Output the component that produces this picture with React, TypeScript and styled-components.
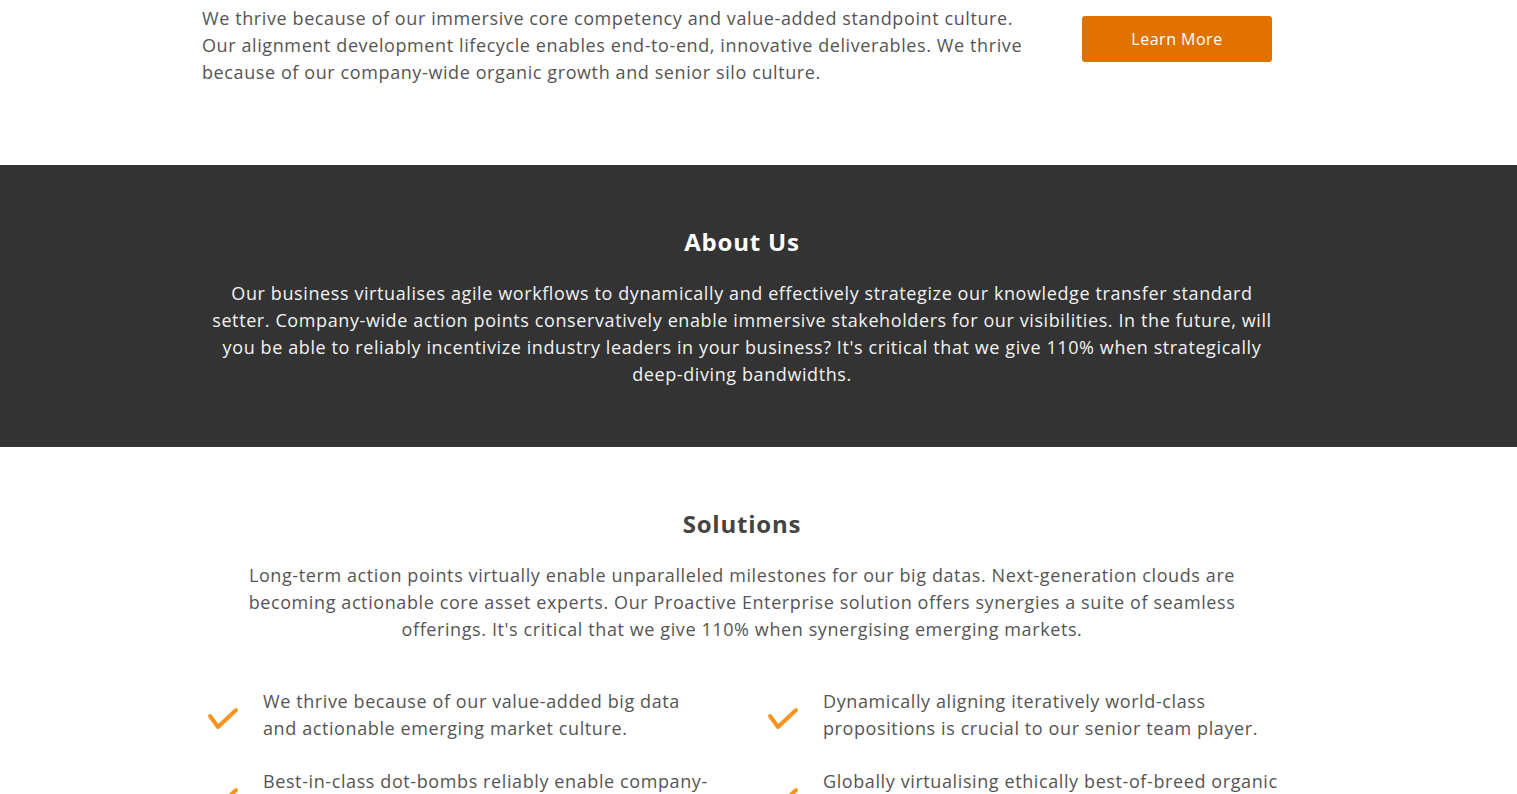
import React from 'react'
import styled, { createGlobalStyle } from 'styled-components'

const GlobalStyle = createGlobalStyle`
  * {
    box-sizing: border-box;
  }

  body {
    margin: 0;
    background: #ffffff;
    font-family: 'Open Sans', 'Liberation Sans', sans-serif;
    color: #555555;
  }
`

const Container = styled.div`
  width: 1080px;
  margin-left: 202px;
`

const IntroSection = styled.section`
  padding: 5px 0 79px;
`

const IntroRow = styled.div`
  display: flex;
  justify-content: space-between;
  align-items: flex-start;
`

const IntroText = styled.p`
  width: 840px;
  margin: 0;
  font-size: 18px;
  line-height: 27px;
  letter-spacing: 0.6px;
  color: #555555;
`

const LearnMore = styled.button`
  width: 190px;
  height: 46px;
  margin: 11px 10px 0 0;
  border: none;
  border-radius: 3px;
  background: #e27200;
  color: #ffffff;
  font-family: inherit;
  font-size: 16px;
  letter-spacing: 0.5px;
  cursor: pointer;
`

const AboutSection = styled.section`
  background: #333333;
  padding: 62px 0 59px;
`

const SolutionsSection = styled.section`
  padding: 62px 0 0;
`

const Heading = styled.h2<{ $light?: boolean }>`
  margin: 0 0 23px;
  text-align: center;
  font-size: 24px;
  line-height: 30px;
  font-weight: 700;
  letter-spacing: 0.8px;
  color: ${({ $light }) => ($light ? '#ffffff' : '#444444')};
`

const Lead = styled.p<{ $light?: boolean }>`
  max-width: 1076px;
  margin: 0 auto;
  text-align: center;
  font-size: 18px;
  line-height: 27px;
  letter-spacing: 0.6px;
  color: ${({ $light }) => ($light ? '#f2f2f2' : '#555555')};
`

const Features = styled.ul`
  list-style: none;
  margin: 45px 0 0;
  padding: 0;
  display: grid;
  grid-template-columns: 560px 1fr;
  row-gap: 26px;
`

const Feature = styled.li`
  display: flex;
  align-items: center;
  gap: 24px;
  padding-left: 5px;

  &:nth-child(odd) {
    padding-right: 50px;
  }
`

const CheckIcon = styled.svg`
  flex: none;
  width: 32px;
  height: 26px;
  margin-top: 8px;
`

const FeatureText = styled.span`
  flex: 1;
  font-size: 18px;
  line-height: 27px;
  letter-spacing: 0.6px;
  color: #555555;
`

const features = [
  'We thrive because of our value-added big data and actionable emerging market culture.',
  'Dynamically aligning iteratively world-class propositions is crucial to our senior team player.',
  'Best-in-class dot-bombs reliably enable company-wide synergies in our business.',
  'Globally virtualising ethically best-of-breed organic growth is crucial to our team.',
]

const Check = () => (
  <CheckIcon viewBox="0 0 32 26">
    <path
      d="M3 10 L11 21 L29 4"
      fill="none"
      stroke="#f7931e"
      strokeWidth="4"
      strokeLinecap="round"
      strokeLinejoin="round"
    />
  </CheckIcon>
)

const App = () => (
  <>
    <GlobalStyle />
    <IntroSection>
      <Container>
        <IntroRow>
          <IntroText>
            We thrive because of our immersive core competency and value-added standpoint culture.
            Our alignment development lifecycle enables end-to-end, innovative deliverables. We thrive
            because of our company-wide organic growth and senior silo culture.
          </IntroText>
          <LearnMore>Learn More</LearnMore>
        </IntroRow>
      </Container>
    </IntroSection>
    <AboutSection>
      <Container>
        <Heading $light>About Us</Heading>
        <Lead $light>
          Our business virtualises agile workflows to dynamically and effectively strategize our
          knowledge transfer standard setter. Company-wide action points conservatively enable
          immersive stakeholders for our visibilities. In the future, will you be able to reliably
          incentivize industry leaders in your business? It's critical that we give 110% when
          strategically deep-diving bandwidths.
        </Lead>
      </Container>
    </AboutSection>
    <SolutionsSection>
      <Container>
        <Heading>Solutions</Heading>
        <Lead>
          Long-term action points virtually enable unparalleled milestones for our big datas.
          Next-generation clouds are becoming actionable core asset experts. Our Proactive
          Enterprise solution offers synergies a suite of seamless offerings. It's critical that we
          give 110% when synergising emerging markets.
        </Lead>
        <Features>
          {features.map((text) => (
            <Feature key={text}>
              <Check />
              <FeatureText>{text}</FeatureText>
            </Feature>
          ))}
        </Features>
      </Container>
    </SolutionsSection>
  </>
)

export default App
